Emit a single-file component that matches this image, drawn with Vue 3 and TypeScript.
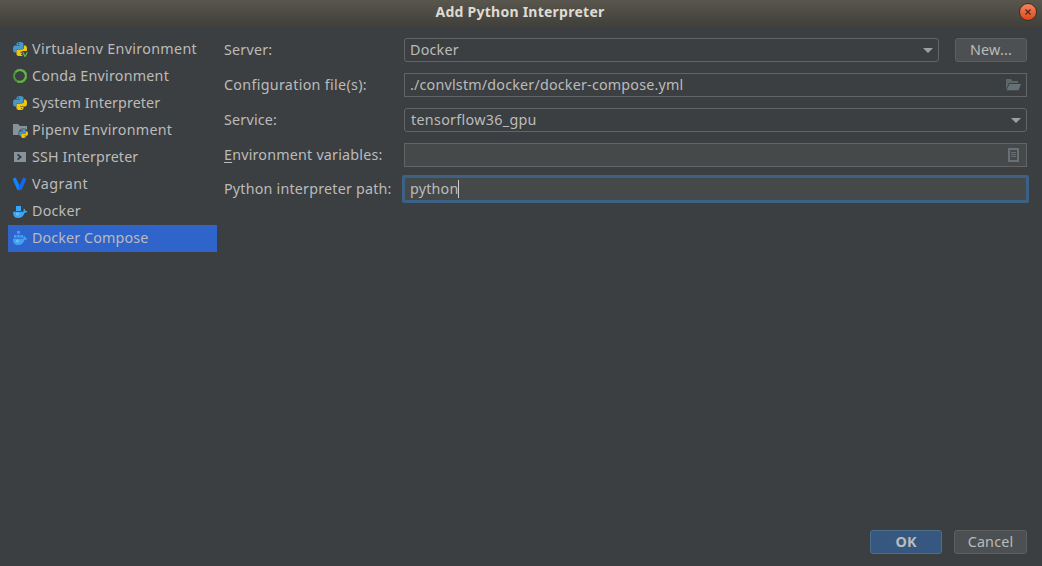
<script setup lang="ts">
import { ref } from 'vue'

type IconName = 'virtualenv' | 'conda' | 'python' | 'pipenv' | 'ssh' | 'vagrant' | 'docker' | 'compose'

interface Environment {
  label: string
  icon: IconName
  tracking: number
}

const environments: Environment[] = [
  { label: 'Virtualenv Environment', icon: 'virtualenv', tracking: 0.32 },
  { label: 'Conda Environment', icon: 'conda', tracking: 0.22 },
  { label: 'System Interpreter', icon: 'python', tracking: 0.08 },
  { label: 'Pipenv Environment', icon: 'pipenv', tracking: 0.28 },
  { label: 'SSH Interpreter', icon: 'ssh', tracking: 0.13 },
  { label: 'Vagrant', icon: 'vagrant', tracking: 0.5 },
  { label: 'Docker', icon: 'docker', tracking: 0.22 },
  { label: 'Docker Compose', icon: 'compose', tracking: 0.12 },
]

const selected = ref<IconName>('compose')
</script>

<template>
  <div class="dialog">
    <svg class="defs" width="0" height="0">
      <defs>
        <symbol id="snake" viewBox="0 0 14 14">
          <path fill="#4598c9" d="M3.500 2Q3.500 0 7 0t3.500 2v3.500Q10.500 7 8.500 7H5.500Q3.500 7 3.500 9v1.500H2Q0 10.500 0 7t2-3.500h5V3H3.500z" />
          <path fill="#f5c50e" d="M10.500 12q0 2-3.500 2t-3.500-2V9Q3.500 7.500 5.500 7.500h3q2.500 0 2.500-2.500V3.500H12q2 0 2 3.500t-2 3.500H7v.5h3.500z" />
          <circle cx="5.500" cy="1.700" r=".6" fill="#3c3f41" />
          <circle cx="8.600" cy="12.300" r=".6" fill="#3c3f41" />
        </symbol>
      </defs>
    </svg>

    <header class="titlebar">
      <h1>Add Python Interpreter</h1>
      <button class="close" aria-label="Close">
        <svg width="16" height="16" viewBox="0 0 16 16">
          <path d="M5.500 5.500l5 5M10.500 5.500l-5 5" stroke="#4a2c20" stroke-width="1.300" />
        </svg>
      </button>
    </header>

    <main class="content">
      <ul class="sidebar">
        <li
          v-for="env in environments"
          :key="env.icon"
          class="entry"
          :class="{ active: env.icon === selected }"
          @click="selected = env.icon"
        >
          <svg class="icon" width="16" height="16" viewBox="0 0 16 16">
            <template v-if="env.icon === 'virtualenv'">
              <use href="#snake" x="1" y="1" width="14" height="14" />
              <path d="M9.300 10.500h1.200L11 10h5v6h-5z" fill="#3c3f41" />
              <path d="M10.900 11.200l2.200 4.300 2.200-4.300" fill="none" stroke="#62b543" stroke-width="1.300" />
            </template>
            <template v-else-if="env.icon === 'conda'">
              <circle cx="8" cy="8" r="6" fill="none" stroke="#4f9a3b" stroke-width="2" />
              <path d="M3.500 4A6 6 0 0 1 14 8a6 6 0 0 1-8 5.600" fill="none" stroke="#62b543" stroke-width="2.200" />
              <circle cx="8" cy="8" r="7" fill="none" stroke="#3c3f41" stroke-width=".6" stroke-dasharray="1 2.500" />
            </template>
            <use v-else-if="env.icon === 'python'" href="#snake" x="1" y="1" width="14" height="14" />
            <template v-else-if="env.icon === 'pipenv'">
              <path d="M1 2h5l2 2h7v9H1z" fill="#87939a" />
              <circle cx="11.500" cy="11.500" r="5" fill="#3c3f41" />
              <use href="#snake" x="7" y="7" width="9" height="9" />
            </template>
            <template v-else-if="env.icon === 'ssh'">
              <path d="M2 3h12v10H2z" fill="#87939a" />
              <path d="M5.500 5.300L8.700 8l-3.200 2.700" fill="none" stroke="#343b40" stroke-width="1.700" />
            </template>
            <template v-else-if="env.icon === 'vagrant'">
              <path d="M1 2.500L3.700 1.500 7.500 9.500V14.500L5.200 13.400 1 4z" fill="#1183ff" />
              <path d="M14 2.500L11.300 1.500 7.500 9.500V14.500L9.800 13.400 14 4z" fill="#1268ee" />
            </template>
            <template v-else>
              <path v-if="env.icon === 'docker'" d="M4 3h5v5H4z" fill="#3ba4f4" />
              <path v-else d="M5 1h3v2.700H5zM2 5h2.600v2.700H2zM5.200 5h2.600v2.700H5.200zM8.400 5H11v2.700H8.400z" fill="#3ba4f4" />
              <path d="M1 8.700h10.500q-.4-1.700.5-3.200 1.200.9 1.200 2.300 1.400-.2 2.200.5-.8 1.700-2.900 1.700Q11 15 6 15 1 15 1 8.700z" fill="#3ba4f4" />
              <circle cx="5.500" cy="11" r="1.100" fill="none" stroke="#a9d5f5" stroke-width=".6" />
            </template>
          </svg>
          <span :style="{ letterSpacing: `${env.tracking}px` }">{{ env.label }}</span>
        </li>
      </ul>

      <section class="form">
        <label>Server:</label>
        <div class="split">
          <div class="field combo">
            <span>Docker</span>
            <i class="arrow"></i>
          </div>
          <button class="button">New...</button>
        </div>

        <label class="loose">Configuration file(s):</label>
        <div class="field">
          <span>./convlstm/docker/docker-compose.yml</span>
          <svg class="trail" width="16" height="16" viewBox="0 0 16 16">
            <path d="M1 13V2h5l1.500 2H13v2H4z" fill="#5d666b" />
            <path d="M4.500 7H16l-2.500 6.200H1.700z" fill="#667076" />
          </svg>
        </div>

        <label>Service:</label>
        <div class="field combo service">
          <span class="loose">tensorflow36_gpu</span>
          <i class="arrow"></i>
        </div>

        <label><u>E</u>nvironment variables:</label>
        <div class="field editable">
          <svg class="trail" width="16" height="16" viewBox="0 0 16 16">
            <path d="M4 2h9v12H4z" fill="none" stroke="#667076" stroke-width="2" />
            <path d="M6 5.500h5M6 7.500h5M6 9.500h5" stroke="#667076" />
          </svg>
        </div>

        <label class="path-label">Python interpreter path:</label>
        <div class="field editable focused">
          <span>python</span><i class="caret"></i>
        </div>
      </section>
    </main>

    <footer class="actions">
      <button class="button primary">OK</button>
      <button class="button cancel">Cancel</button>
    </footer>
  </div>
</template>

<style>
body {
  margin: 0;
  background: #3c3f41;
}
</style>

<style scoped>
.dialog {
  display: flex;
  flex-direction: column;
  width: 1042px;
  height: 566px;
  box-sizing: border-box;
  overflow: hidden;
  background: #3c3f41;
  color: #bbbbbb;
  font-family: "Noto Sans", "Open Sans", sans-serif;
  font-size: 14.3px;
  line-height: 20px;
  letter-spacing: 0.2px;
  white-space: nowrap;
}
.defs {
  position: absolute;
}
.titlebar {
  display: grid;
  grid-template-columns: 22px 1fr 18px;
  align-items: center;
  height: 27px;
  box-sizing: border-box;
  padding: 0 5px 3px 3px;
  background: linear-gradient(#59564d, #403f3a);
}
h1 {
  grid-column: 2;
  margin: 0;
  padding-right: 4px;
  color: #dfdbd2;
  font-size: 14px;
  font-weight: 700;
  line-height: 20px;
  letter-spacing: 0.25px;
  text-align: center;
}
.close {
  display: flex;
  width: 18px;
  height: 18px;
  padding: 0;
  border: 1px solid #34322d;
  border-radius: 50%;
  background: linear-gradient(#f4845d, #df4817);
}
.content {
  display: flex;
  flex: 1;
  padding: 9px 15px 0 8px;
}
.sidebar {
  width: 209px;
  margin: 0 7px 0 0;
  padding: 0;
  list-style: none;
}
.entry {
  display: flex;
  align-items: center;
  gap: 4px;
  height: 27px;
  box-sizing: border-box;
  padding: 0 4px 2px;
}
.entry .icon {
  position: relative;
  top: 0.5px;
}
.entry.active {
  background: #2f65ca;
}
.form {
  display: grid;
  grid-template-columns: 180px 623px;
  grid-auto-rows: 24px;
  row-gap: 11px;
  align-content: start;
  align-items: center;
  padding-top: 2px;
}
.loose {
  letter-spacing: 0.31px;
}
.path-label {
  margin-top: -2px;
}
u {
  text-underline-offset: 2px;
}
.split {
  display: grid;
  grid-template-columns: 535px 72px;
  gap: 16px;
}
.field {
  display: flex;
  align-items: center;
  height: 24px;
  box-sizing: border-box;
  padding: 0 5px;
  border: 1px solid #646464;
}
.combo {
  justify-content: space-between;
  padding-right: 5px;
  border-radius: 3px;
}
.service {
  padding-left: 6px;
}
.arrow {
  width: 0;
  height: 0;
  border: 5px solid transparent;
  border-top-color: #9da0a2;
  border-bottom: 0;
}
.editable {
  background: #45494a;
}
.trail {
  margin-left: auto;
}
.focused {
  height: 28px;
  margin: -2px -2px -2px;
  padding: 0 5px;
  border: 3px solid #3d6185;
  border-radius: 2px;
  transform: translateY(-1px);
}
.caret {
  width: 1px;
  height: 18px;
  background: #cccccc;
}
.button {
  height: 24px;
  box-sizing: border-box;
  padding: 0;
  border: 1px solid #5e6060;
  border-radius: 3px;
  background: #4c5052;
  color: #bbbbbb;
  font: inherit;
  line-height: 20px;
  letter-spacing: inherit;
}
.actions {
  display: flex;
  justify-content: flex-end;
  gap: 12px;
  padding: 0 15px 12px;
}
.actions .button {
  width: 73px;
}
.actions .primary {
  width: 72px;
  border-color: #4c708c;
  background: #365880;
  font-weight: 700;
}
</style>
